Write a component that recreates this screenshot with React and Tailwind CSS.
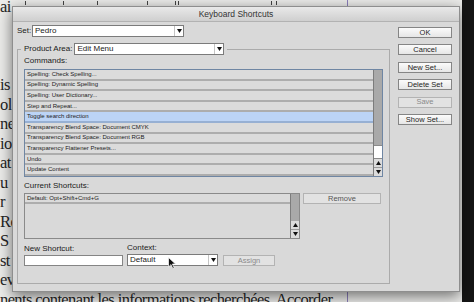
const commands = [
  'Spelling: Check Spelling...',
  'Spelling: Dynamic Spelling',
  'Spelling: User Dictionary...',
  'Step and Repeat...',
  'Toggle search direction',
  'Transparency Blend Space: Document CMYK',
  'Transparency Blend Space: Document RGB',
  'Transparency Flattener Presets...',
  'Undo',
  'Update Content',
];

const paperLines = ['ai', '', '', '', 'is', 'ol', 'ne', 'io', 'at', 'u', 'r', 'Re', 'S l', 'st', 'ev', 'nents contenant les informations recherchées. Accorder'];

const ticks = [25, 63, 97, 147, 175, 178, 271, 276];

function Arrow({ up }) {
  return (
    <svg width="5" height="4" viewBox="0 0 5 4">
      <path d={up ? 'M2.5 0L5 4H0Z' : 'M0 0H5L2.5 4Z'} fill="#111" />
    </svg>
  );
}

function Select({ value, className }) {
  return (
    <div className={`flex h-[12px] items-stretch border border-[#7b7b7b] bg-white ${className}`}>
      <span className="flex-1 pl-[2px] text-[8px] leading-[10px] text-[#1a1a1a]">{value}</span>
      <span className="flex w-[9px] items-center justify-center border-l border-[#c4c4c4]">
        <Arrow />
      </span>
    </div>
  );
}

function Button({ children, disabled, className = '' }) {
  return (
    <div
      className={`flex h-[11px] items-center justify-center border text-[7.5px] leading-none ${
        disabled ? 'border-[#b3b3b3] bg-[#e2e2e2] text-[#8a8a8a]' : 'border-[#858585] bg-gradient-to-b from-[#fbfbfb] to-[#e6e6e6] text-[#1e1e1e]'
      } ${className}`}
    >
      {children}
    </div>
  );
}

function ScrollBar({ thumb }) {
  return (
    <div className="flex w-[9px] flex-col border-l border-[#7c7c7c] bg-[#a9a9a9]">
      <div className="flex-1" />
      {thumb && <div className="h-[14px] border-y border-[#8a8a8a] bg-white" />}
      <div className="flex h-[9px] items-center justify-center border-b border-[#9a9a9a] bg-[#dcdcdc]">
        <Arrow up />
      </div>
      <div className="flex h-[8px] items-center justify-center bg-[#dcdcdc]">
        <Arrow />
      </div>
    </div>
  );
}

export default function App() {
  return (
    <div className="relative flex h-[302px] w-[474px] overflow-hidden font-['Liberation_Sans',Arial,sans-serif]">
      <div className="relative h-full w-[462px] bg-[#ededeb]">
        {ticks.map((x) => (
          <span key={x} className="absolute top-[1px] h-[4px] w-[1px] bg-[#444]" style={{ left: x }} />
        ))}
        <span className="absolute left-[347px] top-0 h-full w-[1px] bg-[#8d80bd]" />
        <div className="-mt-[3px] flex flex-col whitespace-nowrap font-['Liberation_Serif',serif] text-[16.5px] leading-[19.5px] tracking-[-0.6px] text-[#262626]">
          {paperLines.map((l, i) => (
            <div key={i} className="h-[19.5px]">{l}</div>
          ))}
        </div>
      </div>
      <div className="flex-1 bg-[#151515]" />

      <div className="absolute left-[12px] top-[6px] flex h-[286px] w-[448px] flex-col border border-[#8e8e8e] bg-[#d9d9d9] shadow-[0_4px_14px_rgba(0,0,0,0.55)]">
        <div className="flex h-[15px] items-center justify-center border-b border-[#b2b2b2] bg-gradient-to-b from-[#e9e9e9] to-[#cfcfcf] text-[8.5px] text-[#333]">
          Keyboard Shortcuts
        </div>
        <div className="flex pl-[4px] pt-[3px]">
          <div className="flex w-[372px] flex-col">
            <div className="flex h-[12px] items-center">
              <span className="w-[15px] text-[8px] text-[#1a1a1a]">Set:</span>
              <Select value="Pedro" className="w-[152px]" />
            </div>

            <fieldset className="mt-[6px] h-[241px] border border-[#ababab] px-[6px]">
              <legend className="-ml-[3px] flex items-center px-[3px]">
                <span className="text-[8px] text-[#1a1a1a]">Product Area:</span>
                <Select value="Edit Menu" className="ml-[2px] w-[150px]" />
              </legend>
              <div className="h-[12px] text-[8px] leading-[12px] text-[#1a1a1a]">Commands:</div>
              <div className="mt-[2px] flex h-[108px] w-[359px] border border-[#6f86a3]">
                <div className="flex flex-1 flex-col">
                  {commands.map((c) => (
                    <div
                      key={c}
                      className={`flex h-[10.6px] items-center border-b-2 pl-[2px] text-[6px] text-[#222] ${
                        c === 'Toggle search direction' ? 'border-[#97b0d3] bg-[#bcd4f6]' : 'border-[#adadad] bg-[#dbdbdb]'
                      }`}
                    >
                      {c}
                    </div>
                  ))}
                </div>
                <ScrollBar thumb />
              </div>

              <div className="mt-[3px] h-[12px] text-[8px] leading-[12px] text-[#1a1a1a]">Current Shortcuts:</div>
              <div className="mt-[1px] flex items-start">
                <div className="flex h-[46px] w-[276px] border border-[#8a8a8a] bg-[#d9d9d9]">
                  <div className="flex-1">
                    <div className="flex h-[10px] items-center border-b-2 border-[#adadad] bg-[#dbdbdb] pl-[2px] text-[6px] text-[#222]">
                      Default: Opt+Shift+Cmd+G
                    </div>
                  </div>
                  <ScrollBar />
                </div>
                <Button disabled className="ml-[3px] w-[78px] text-[#555]">Remove</Button>
              </div>

              <div className="mt-[3px] flex items-end">
                <div className="flex w-[99px] flex-col">
                  <span className="h-[12px] text-[8px] leading-[12px] text-[#1a1a1a]">New Shortcut:</span>
                  <div className="h-[11px] border border-[#858585] bg-white" />
                </div>
                <div className="ml-[4px] flex w-[91px] flex-col">
                  <span className="h-[12px] text-[8px] leading-[12px] text-[#1a1a1a]">Context:</span>
                  <Select value="Default" className="h-[11px]" />
                </div>
                <Button disabled className="ml-[5px] w-[52px] text-[#6a6a6a]">Assign</Button>
              </div>
            </fieldset>
          </div>

          <div className="ml-[9px] mt-[2px] flex w-[54px] flex-col gap-[6.4px]">
            <Button>OK</Button>
            <Button>Cancel</Button>
            <Button>New Set...</Button>
            <Button>Delete Set</Button>
            <Button disabled>Save</Button>
            <Button>Show Set...</Button>
          </div>
        </div>
      </div>

      <svg className="absolute left-[168px] top-[257px]" width="8" height="12" viewBox="0 0 8 12">
        <path d="M0.5 0.5V10L3 7.6L4.8 11.5L6.2 10.8L4.4 7H7.5Z" fill="#111" stroke="#fff" strokeWidth="0.7" />
      </svg>
    </div>
  );
}
